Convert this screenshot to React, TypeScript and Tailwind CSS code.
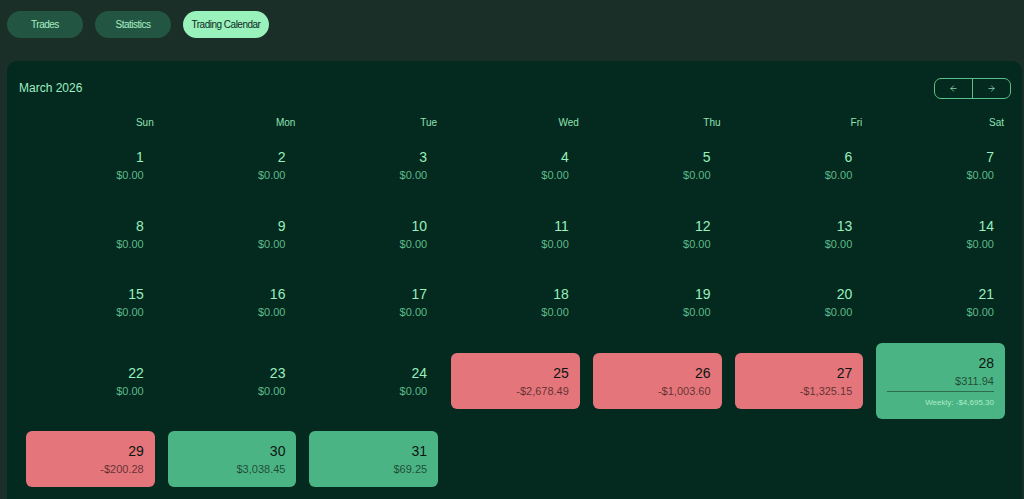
import React from "react";
import { ArrowLeft, ArrowRight } from "lucide-react";

type Day = { day: number; pnl: number; weekly?: number };

const fmt = (v: number) => {
  const s = Math.abs(v).toLocaleString("en-US", {
    minimumFractionDigits: 2,
    maximumFractionDigits: 2,
  });
  return (v < 0 ? "-$" : "$") + s;
};

const pnl: Record<number, number> = {
  25: -2678.49,
  26: -1003.6,
  27: -1325.15,
  28: 311.94,
  29: -200.28,
  30: 3038.45,
  31: 69.25,
};

const days: Day[] = Array.from({ length: 31 }, (_, i) => {
  const d = i + 1;
  const item: Day = { day: d, pnl: pnl[d] ?? 0 };
  if (d === 28) item.weekly = -4695.3;
  return item;
});

const weekdays = ["Sun", "Mon", "Tue", "Wed", "Thu", "Fri", "Sat"];

function DayCell({ d }: { d: Day }) {
  if (d.pnl === 0) {
    return (
      <div className="px-[11px] py-[10px] text-right">
        <div className="text-[14px] leading-[20px] text-[#97f0bd]">{d.day}</div>
        <div className="text-[11px] leading-[16px] text-[#5dbb8a]">{fmt(d.pnl)}</div>
      </div>
    );
  }
  const tone = d.pnl < 0 ? "bg-[#e4757a]" : "bg-[#4bb484]";
  const hasWeekly = d.weekly !== undefined;
  return (
    <div className={`${tone} rounded-[6px] px-[11px] pt-[10px] ${hasWeekly ? "pb-[9px]" : "pb-[10px]"} text-right`}>
      <div className="text-[14px] leading-[20px] text-[#0c1512]">{d.day}</div>
      <div className="text-[11px] leading-[16px] text-black/60">{fmt(d.pnl)}</div>
      {hasWeekly && (
        <div className="mt-[2px] border-t border-black/40 pt-[4px] text-[8px] leading-[14px] text-[#b9f5d2]/90">
          Weekly: {fmt(d.weekly as number)}
        </div>
      )}
    </div>
  );
}

export default function App() {
  const tabs = ["Trades", "Statistics", "Trading Calendar"];
  return (
    <div
      className="min-h-[499px] bg-[#1a2f27] pl-[7px] pr-[2px] pt-[11px]"
      style={{ fontFamily: '"Liberation Sans", Arial, sans-serif' }}
    >
      <div className="flex gap-[12px]">
        {tabs.map((t, i) => (
          <button
            key={t}
            className={`h-[27px] rounded-full text-[10px] tracking-[-0.5px] ${
              i === 2 ? "w-[86px] bg-[#99f1bb] text-[#0e2a1f]" : "w-[76px] bg-[#235642] text-[#a6efc4]"
            }`}
          >
            {t}
          </button>
        ))}
      </div>

      <div className="mt-[23px] h-[460px] rounded-[10px] bg-[#04291f] pl-[12px] pr-[11px] pt-[16px]">
        <div className="flex h-[22px] items-center justify-between">
          <div className="text-[12px] text-[#9cefc0]">March 2026</div>
          <div className="flex h-[21px] w-[77px] rounded-[7px] border border-[#5bbf8c]">
            <div className="flex flex-1 items-center justify-center border-r border-[#5bbf8c] text-[#8fe5b3]">
              <ArrowLeft size={9} strokeWidth={2} />
            </div>
            <div className="flex flex-1 items-center justify-center text-[#8fe5b3]">
              <ArrowRight size={9} strokeWidth={2} />
            </div>
          </div>
        </div>

        <div className="ml-[7px] mr-[6px]">
          <div className="mt-[17px] grid grid-cols-7 gap-x-[13px]">
            {weekdays.map((w) => (
              <div key={w} className="pr-[1px] text-right text-[10px] leading-[14px] text-[#8fe2b1]">
                {w}
              </div>
            ))}
          </div>
          <div className="mt-[7px] grid grid-cols-7 items-center gap-x-[13px] gap-y-[12.5px]">
            {days.map((d) => (
              <DayCell key={d.day} d={d} />
            ))}
          </div>
        </div>
      </div>
    </div>
  );
}
